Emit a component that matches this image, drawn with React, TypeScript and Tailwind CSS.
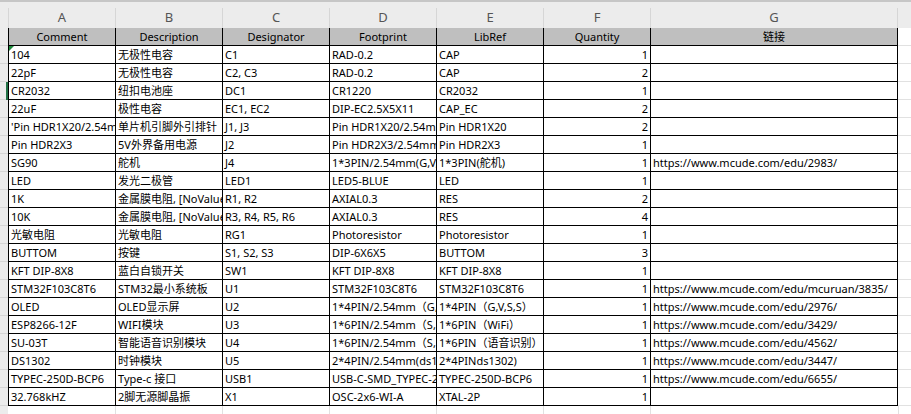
import React from "react";

const FONT = { fontFamily: '"Noto Sans", "Noto Sans CJK SC", sans-serif' };

const rows: string[][] = [
  ["104", "无极性电容", "C1", "RAD-0.2", "CAP", "1", ""],
  ["22pF", "无极性电容", "C2, C3", "RAD-0.2", "CAP", "2", ""],
  ["CR2032", "纽扣电池座", "DC1", "CR1220", "CR2032", "1", ""],
  ["22uF", "极性电容", "EC1, EC2", "DIP-EC2.5X5X11", "CAP_EC", "2", ""],
  ["'Pin HDR1X20/2.54mm", "单片机引脚外引排针", "J1, J3", "Pin HDR1X20/2.54mm", "Pin HDR1X20", "2", ""],
  ["Pin HDR2X3", "5V外界备用电源", "J2", "Pin HDR2X3/2.54mm", "Pin HDR2X3", "1", ""],
  ["SG90", "舵机", "J4", "1*3PIN/2.54mm(G,V,IO)", "1*3PIN(舵机)", "1", "https://www.mcude.com/edu/2983/"],
  ["LED", "发光二极管", "LED1", "LED5-BLUE", "LED", "1", ""],
  ["1K", "金属膜电阻, [NoValue]", "R1, R2", "AXIAL0.3", "RES", "2", ""],
  ["10K", "金属膜电阻, [NoValue]", "R3, R4, R5, R6", "AXIAL0.3", "RES", "4", ""],
  ["光敏电阻", "光敏电阻", "RG1", "Photoresistor", "Photoresistor", "1", ""],
  ["BUTTOM", "按键", "S1, S2, S3", "DIP-6X6X5", "BUTTOM", "3", ""],
  ["KFT DIP-8X8", "蓝白自锁开关", "SW1", "KFT DIP-8X8", "KFT DIP-8X8", "1", ""],
  ["STM32F103C8T6", "STM32最小系统板", "U1", "STM32F103C8T6", "STM32F103C8T6", "1", "https://www.mcude.com/edu/mcuruan/3835/"],
  ["OLED", "OLED显示屏", "U2", "1*4PIN/2.54mm（G,V,S,S）", "1*4PIN（G,V,S,S）", "1", "https://www.mcude.com/edu/2976/"],
  ["ESP8266-12F", "WIFI模块", "U3", "1*6PIN/2.54mm（S,R,T,V）", "1*6PIN（WiFi）", "1", "https://www.mcude.com/edu/3429/"],
  ["SU-03T", "智能语音识别模块", "U4", "1*6PIN/2.54mm（S,R,T,V）", "1*6PIN（语音识别）", "1", "https://www.mcude.com/edu/4562/"],
  ["DS1302", "时钟模块", "U5", "2*4PIN/2.54mm(ds1302)", "2*4PINds1302)", "1", "https://www.mcude.com/edu/3447/"],
  ["TYPEC-250D-BCP6", "Type-c 接口", "USB1", "USB-C-SMD_TYPEC-250D-BCP6", "TYPEC-250D-BCP6", "1", "https://www.mcude.com/edu/6655/"],
  ["32.768kHZ", "2脚无源脚晶振", "X1", "OSC-2x6-WI-A", "XTAL-2P", "1", ""],
];

const headers = ["Comment", "Description", "Designator", "Footprint", "LibRef", "Quantity", "链接"];
const letters = ["A", "B", "C", "D", "E", "F", "G"];
const widths = ["w-[107px]", "w-[107px]", "w-[107px]", "w-[107px]", "w-[107px]", "w-[107px]", "w-[248px]"];

export default function App() {
  return (
    <div className="w-[911px] h-[414px] overflow-hidden bg-white text-black" style={FONT}>
      <div className="h-[2px] bg-[#c6c6c6]" />
      {/* column letters */}
      <div className="flex h-[26px] pt-[6px] bg-[#ececec]">
        <div className="w-[8px] shrink-0" />
        {letters.map((l, i) => (
          <div
            key={l}
            className={`${widths[i]} shrink-0 border-l ${i === 6 ? "border-r" : ""} border-[#d6d6d6] flex items-center justify-center text-[13px] text-[#555]`}
          >
            {l}
          </div>
        ))}
        <div className="flex-1" />
      </div>
      {/* header row */}
      <div className="flex h-[18px]">
        <div className="w-[8px] shrink-0 bg-[#ececec] border-b border-[#d6d6d6]" />
        {headers.map((h, i) => (
          <div
            key={h}
            className={`${widths[i]} shrink-0 border-l ${i === 6 ? "border-r" : ""} border-b border-black bg-[#bfbfbf] flex items-center justify-center text-[11px] leading-none`}
          >
            {h}
          </div>
        ))}
        <div className="flex-1 border-b border-[#e1e1e1]" />
      </div>
      {rows.map((r, ri) => (
        <div key={ri} className="flex h-[18px]">
          <div className="w-[8px] shrink-0 bg-[#ececec] border-b border-[#d6d6d6] relative">
            {ri === 2 && <div className="absolute right-0 top-0 w-[2px] h-[18px] bg-[#217346]" />}
          </div>
          {r.map((c, ci) => (
            <div
              key={ci}
              className={`${widths[ci]} shrink-0 border-l ${ci === 6 ? "border-r" : ""} border-b border-black flex items-center overflow-hidden whitespace-nowrap text-[11px] leading-none relative ${
                ci === 5 ? "justify-end pr-[2px]" : "pl-[2px]"
              }`}
            >
              {ri === 0 && ci === 0 && (
                <div className="absolute left-0 top-0 w-0 h-0 border-t-[5px] border-r-[5px] border-t-[#1e8a3c] border-r-transparent" />
              )}
              {c}
            </div>
          ))}
          <div className="flex-1 border-b border-[#e1e1e1]" />
        </div>
      ))}
      {/* empty trailing row */}
      <div className="flex h-[18px]">
        <div className="w-[8px] shrink-0 bg-[#ececec]" />
        {widths.map((w, i) => (
          <div key={i} className={`${w} shrink-0 ${i === 0 ? "" : "border-l border-[#e1e1e1]"}`} />
        ))}
        <div className="flex-1 border-l border-[#e1e1e1]" />
      </div>
    </div>
  );
}
